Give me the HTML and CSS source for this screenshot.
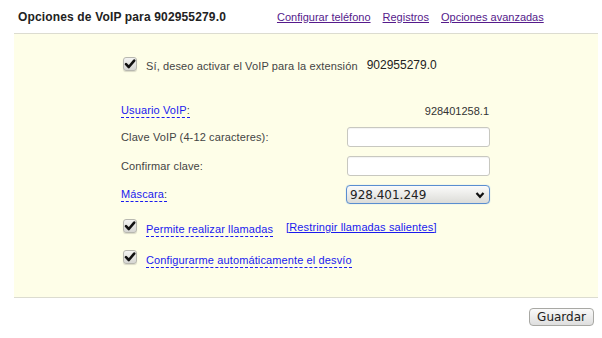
FILE: index.html
```html
<!DOCTYPE html>
<html lang="es">
  <head>
    <meta charset="UTF-8" />
    <title>Opciones de VoIP</title>
    <link rel="stylesheet" href="styles.css">
  </head>
  <body>
    <div class="header">
      <h1>Opciones de VoIP para 902955279.0</h1>
      <a href="#" class="visited">Configurar teléfono</a>
      <a href="#" class="visited">Registros</a>
      <a href="#" class="visited">Opciones avanzadas</a>
    </div>

    <div class="panel">
      <div class="form">
        <div class="check-row activate">
          <span class="check"><svg viewBox="0 0 14 14" width="14" height="14"><path d="M3 7.2 L5.8 10 L11.2 3.6" fill="none" stroke="#111" stroke-width="2.6" stroke-linecap="round" stroke-linejoin="round"/></svg></span>
          <span class="check-text">Sí, deseo activar el VoIP para la extensión</span>
          <span class="ext">902955279.0</span>
        </div>

        <div class="field user">
          <span class="hint"><a href="#">Usuario VoIP</a>:</span>
          <span class="value">928401258.1</span>
        </div>

        <div class="field">
          <label for="clave">Clave VoIP (4-12 caracteres):</label>
          <input type="password" id="clave" />
        </div>

        <div class="field">
          <label for="confirmar">Confirmar clave:</label>
          <input type="password" id="confirmar" />
        </div>

        <div class="field mask">
          <span class="hint"><a href="#">Máscara</a>:</span>
          <div class="select">
            <span>928.401.249</span>
            <svg viewBox="0 0 10 8" width="10" height="8"><path d="M1.5 2 L5 5.8 L8.5 2" fill="none" stroke="#111" stroke-width="2.2"/></svg>
          </div>
        </div>

        <div class="check-row calls">
          <span class="check"><svg viewBox="0 0 14 14" width="14" height="14"><path d="M3 7.2 L5.8 10 L11.2 3.6" fill="none" stroke="#111" stroke-width="2.6" stroke-linecap="round" stroke-linejoin="round"/></svg></span>
          <span class="hint"><a href="#">Permite realizar llamadas</a></span>
          <a href="#" class="restrict">[Restringir llamadas salientes]</a>
        </div>

        <div class="check-row divert">
          <span class="check"><svg viewBox="0 0 14 14" width="14" height="14"><path d="M3 7.2 L5.8 10 L11.2 3.6" fill="none" stroke="#111" stroke-width="2.6" stroke-linecap="round" stroke-linejoin="round"/></svg></span>
          <span class="hint"><a href="#">Configurarme automáticamente el desvío</a></span>
        </div>
      </div>
    </div>

    <div class="actions">
      <button type="button">Guardar</button>
    </div>
  </body>
</html>
```

FILE: styles.css
```css
body {
  margin: 0;
  font-family: "Liberation Sans", Arial, sans-serif;
  font-size: 11px;
  color: #444;
  background: #ffffff;
}

a {
  color: #1a1aee;
}

.header {
  display: flex;
  align-items: center;
  height: 33px;
  padding-left: 18px;
}

.header h1 {
  margin: 0 51px 0 0;
  font-size: 12px;
  font-weight: bold;
  letter-spacing: 0.15px;
  color: #222;
}

.header a {
  margin-right: 12px;
  padding-top: 1px;
}

.header a.visited {
  color: #551a8b;
}

.panel {
  margin: 0 4px 0 14px;
  height: 263px;
  background: #fefee8;
  border-top: 1px solid #dcdcd0;
  border-bottom: 1px solid #dcdcd0;
  letter-spacing: 0.12px;
}

.form {
  width: 369px;
  margin-left: 107px;
  padding-top: 22px;
}

.check-row {
  display: flex;
  align-items: center;
}

.check {
  display: inline-flex;
  width: 14px;
  height: 14px;
  margin: 0 9px 0 2px;
  border: 1px solid #b8b8b0;
  border-radius: 3px;
  background: linear-gradient(#f4f4f2, #d6d6d2);
  box-shadow: 0 1px 1px rgba(0, 0, 0, 0.15);
  box-sizing: border-box;
}

.check svg {
  margin: -1px;
}

.check-row .check-text {
  padding-top: 3px;
}

.ext {
  margin-left: 9px;
  padding-top: 2px;
  font-size: 12px;
  color: #222;
  letter-spacing: 0;
}

.hint {
  display: inline-block;
  border-bottom: 1px dashed #1a1aee;
  line-height: 14px;
}

.hint a {
  text-decoration: none;
}

.field {
  display: flex;
  justify-content: space-between;
  align-items: center;
  height: 29px;
}

.field.user {
  margin-top: 24px;
  margin-bottom: -3px;
}

.value {
  color: #333;
  padding-right: 1px;
  letter-spacing: 0;
}

.field input {
  width: 143px;
  height: 20px;
  margin: 0;
  padding: 0 4px;
  border: 1px solid #c8c8c0;
  border-radius: 3px;
  background: #ffffff;
  box-sizing: border-box;
  box-shadow: inset 0 1px 1px rgba(0, 0, 0, 0.05);
}

.select {
  display: flex;
  justify-content: space-between;
  align-items: center;
  width: 144px;
  height: 19px;
  padding: 0 4px 0 3px;
  border: 1px solid #5a8ed0;
  border-radius: 4px;
  background: linear-gradient(#fbfbfa, #dcdcd8);
  box-shadow: 0 0 1px #8ab4e8;
  box-sizing: border-box;
  font-family: "DejaVu Sans", sans-serif;
  font-size: 12px;
  color: #222;
  letter-spacing: 0;
}

.check-row.calls {
  margin-top: 6px;
}

.check-row.divert {
  margin-top: 9px;
}

.check-row .hint {
  margin-top: 7px;
}

.restrict {
  margin-left: 13px;
  margin-top: 1px;
}

.actions {
  display: flex;
  justify-content: flex-end;
  padding: 10px 8px 0 0;
}

.actions button {
  height: 18px;
  padding: 0 7px;
  font-family: "DejaVu Sans", sans-serif;
  font-size: 12px;
  color: #222;
  border: 1px solid #a8a8a4;
  border-radius: 4px;
  background: linear-gradient(#fafafa, #dedede);
  cursor: pointer;
}
```
